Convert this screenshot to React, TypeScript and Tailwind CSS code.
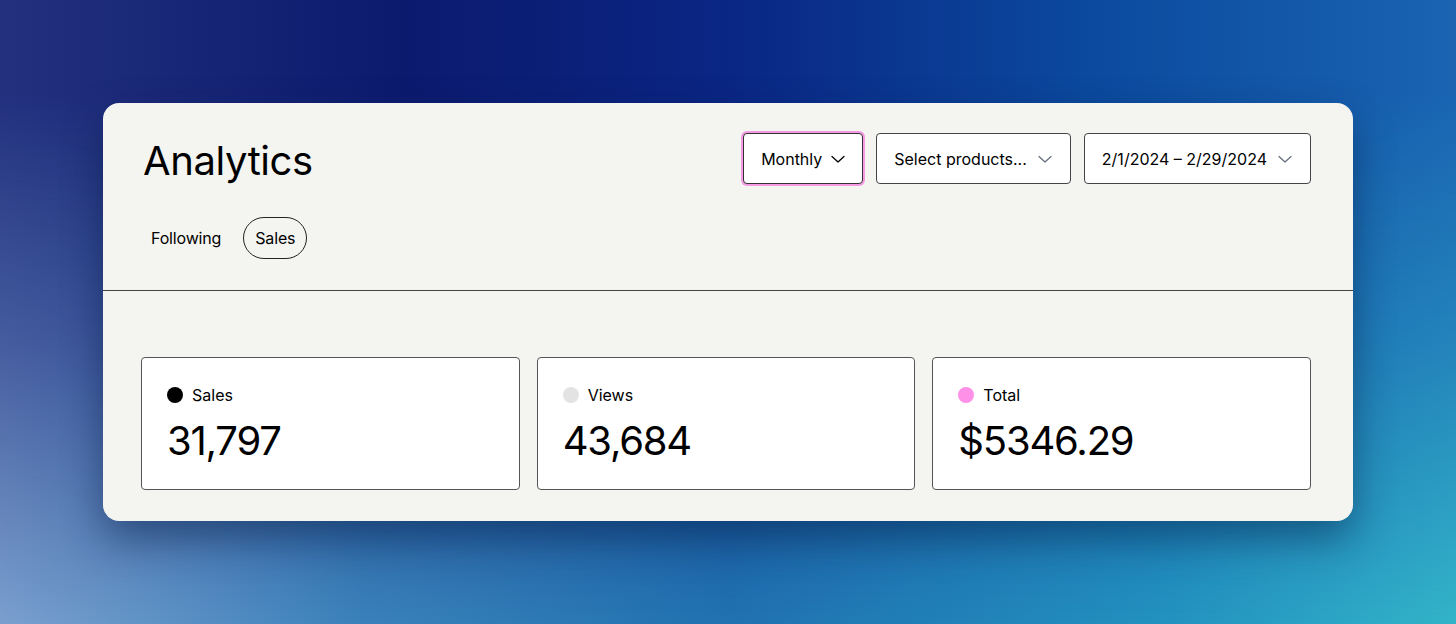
import React from 'react';

const font = { fontFamily: 'Inter, "Noto Sans", sans-serif' };

const Chevron: React.FC<{ dark?: boolean }> = ({ dark }) => (
  <svg width="16" height="16" viewBox="0 0 16 16" fill="none" className={dark ? 'text-black' : 'text-gray-500'}>
    <polyline points="2,5.5 8,11 14,5.5" stroke="currentColor" strokeWidth="1.3" strokeLinecap="round" strokeLinejoin="round" />
  </svg>
);

const stats = [
  { label: 'Sales', value: '31,797', dot: 'bg-black' },
  { label: 'Views', value: '43,684', dot: 'bg-[#e3e3e3]' },
  { label: 'Total', value: '$5346.29', dot: 'bg-[#ff90e8]' },
];

export default function App() {
  return (
    <div className="grid h-[624px] w-full overflow-hidden bg-[linear-gradient(90deg,#7ba0cf_0%,#3a82bb_25%,#2172b0_50%,#2392c0_80%,#33b4c9_100%)]" style={font}>
      <div className="[grid-area:1/1] bg-[linear-gradient(90deg,#22307e_0%,#0c1a6e_28%,#0a2684_50%,#0b4a9e_75%,#1a64b2_100%)] [mask-image:linear-gradient(to_bottom,black_15%,rgba(0,0,0,0.6)_55%,transparent_100%)]" />
      <div className="[grid-area:1/1] relative pt-[103px] px-[103px]">
        <div className="w-[1250px] h-[418px] rounded-[16px] bg-[#f4f4f1] shadow-[0_18px_40px_rgba(0,20,60,0.45)] overflow-hidden">
          <div className="pl-[40px] pr-[42px] pt-[30px] pb-[31px] border-b border-[#444]">
            <div className="flex items-center justify-between">
              <h1 className="text-[40px] leading-none text-black tracking-[-0.01em] mt-[4px]">Analytics</h1>
              <div className="flex gap-[13px]">
                <button className="h-[51px] flex items-center gap-[8px] pl-[17px] pr-[16px] rounded-[4px] bg-white border border-[#333] shadow-[0_0_0_2px_#f49ae2] text-[16px] text-black">
                  Monthly <Chevron dark />
                </button>
                <button className="h-[51px] flex items-center gap-[10px] px-[17px] rounded-[4px] bg-white border border-[#444] text-[16px] text-black">
                  Select products... <Chevron />
                </button>
                <button className="h-[51px] flex items-center gap-[10px] px-[17px] rounded-[4px] bg-white border border-[#444] text-[16px] text-black">
                  2/1/2024 – 2/29/2024 <Chevron />
                </button>
              </div>
            </div>
            <div className="flex gap-[10px] mt-[33px] -ml-[4px]">
              <div className="h-[42px] flex items-center px-[12px] rounded-full text-[16px] text-black tracking-[-0.01em]">Following</div>
              <div className="h-[42px] flex items-center px-[11px] rounded-full border border-[#222] text-[16px] text-black tracking-[-0.01em]">Sales</div>
            </div>
          </div>
          <div className="pl-[38px] pr-[42px] pt-[66px]">
            <div className="grid grid-cols-3 gap-[17px]">
              {stats.map((s) => (
                <div key={s.label} className="h-[133px] rounded-[4px] bg-white border border-[#555] pl-[25px] pt-[27px]">
                  <div className="flex items-center gap-[9px] h-[20px]">
                    <span className={`w-[16px] h-[16px] rounded-full ${s.dot}`} />
                    <span className="text-[16px] text-black">{s.label}</span>
                  </div>
                  <div className="mt-[12px] text-[40px] leading-[48px] text-black tracking-[-0.03em]">{s.value}</div>
                </div>
              ))}
            </div>
          </div>
        </div>
      </div>
    </div>
  );
}
